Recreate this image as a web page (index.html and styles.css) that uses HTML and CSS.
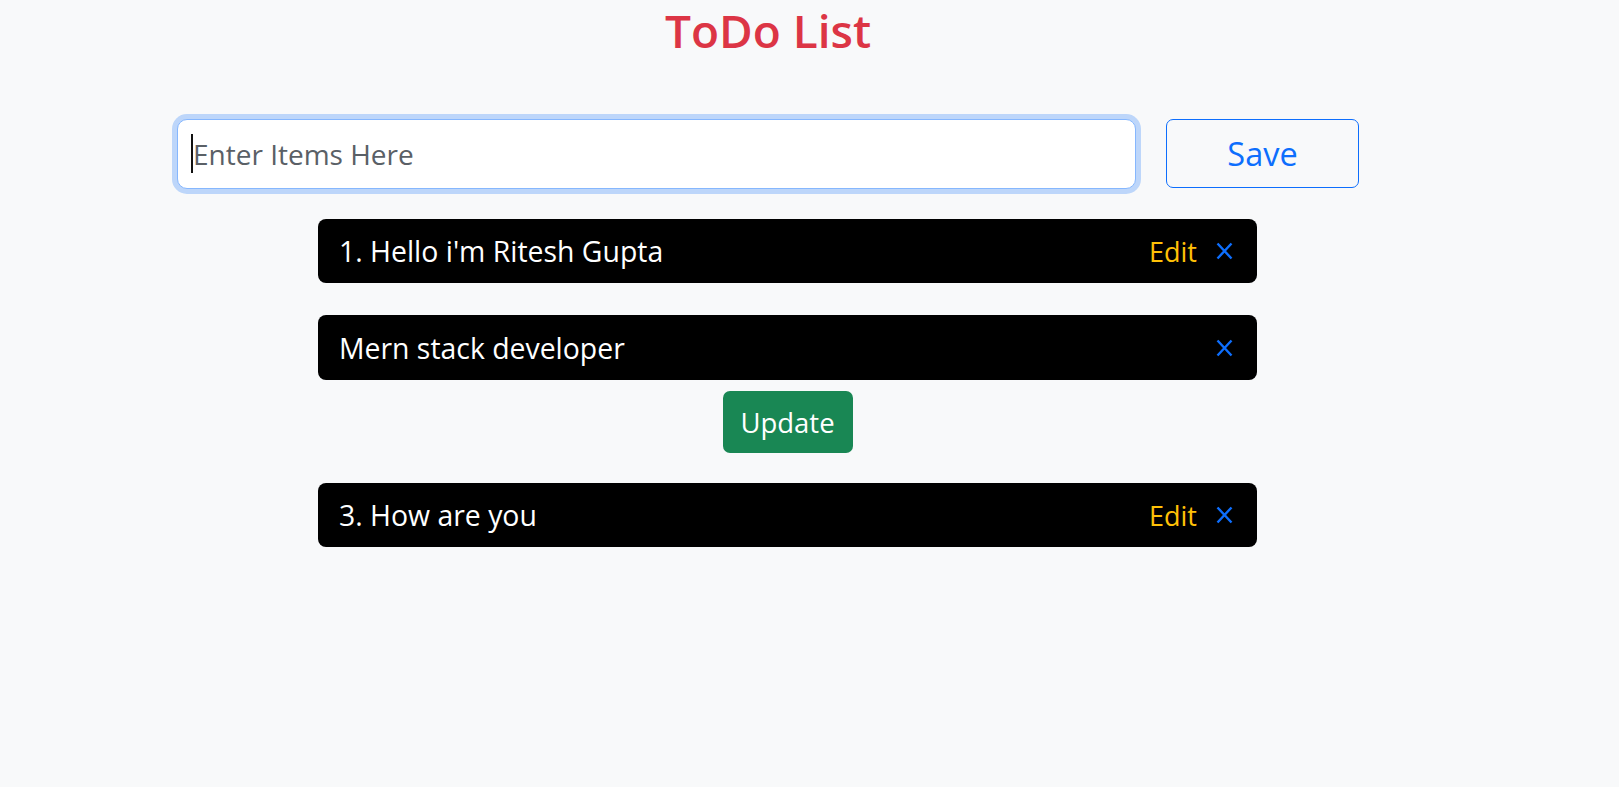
FILE: index.html
```html
<!DOCTYPE html>
<html lang="en">
<head>
<meta charset="utf-8">
<title>ToDo List</title>
<link rel="stylesheet" href="styles.css">
</head>
<body>
<main class="app">
  <h1 class="title">ToDo List</h1>
  <div class="entry">
    <div class="field">
      <input class="field-input" type="text" placeholder="Enter Items Here">
      <span class="caret"></span>
    </div>
    <button class="btn-save" type="button">Save</button>
  </div>
  <ul class="todos">
    <li class="todo">
      <span class="todo-text">1. Hello i'm Ritesh Gupta</span>
      <span class="todo-actions">
        <span class="todo-edit">Edit</span>
        <svg class="todo-del" width="17" height="18" viewBox="0 0 17 18"><path d="M1.5 1.5 L15.5 16.5 M15.5 1.5 L1.5 16.5" stroke="#0d6efd" stroke-width="2.4" fill="none"/></svg>
      </span>
    </li>
    <li class="todo todo-editing">
      <span class="todo-text">Mern stack developer</span>
      <span class="todo-actions">
        <svg class="todo-del" width="17" height="18" viewBox="0 0 17 18"><path d="M1.5 1.5 L15.5 16.5 M15.5 1.5 L1.5 16.5" stroke="#0d6efd" stroke-width="2.4" fill="none"/></svg>
      </span>
    </li>
    <li class="update-row">
      <button class="btn-update" type="button">Update</button>
    </li>
    <li class="todo">
      <span class="todo-text">3. How are you</span>
      <span class="todo-actions">
        <span class="todo-edit">Edit</span>
        <svg class="todo-del" width="17" height="18" viewBox="0 0 17 18"><path d="M1.5 1.5 L15.5 16.5 M15.5 1.5 L1.5 16.5" stroke="#0d6efd" stroke-width="2.4" fill="none"/></svg>
      </span>
    </li>
  </ul>
</main>
</body>
</html>
```

FILE: styles.css
```css
* {
  box-sizing: border-box;
}

html, body {
  margin: 0;
  padding: 0;
}

body {
  background: #f8f9fa;
  font-family: "Open Sans", "Noto Sans", sans-serif;
  color: #212529;
  min-height: 787px;
}

.app {
  width: 1536px;
}

.title {
  margin: 0;
  text-align: center;
  font-size: 46px;
  font-weight: 600;
  line-height: 60px;
  color: #dc3545;
}

.entry {
  display: flex;
  align-items: flex-start;
  gap: 30px;
  margin: 59px 0 0 177px;
}

.field {
  position: relative;
  width: 959px;
  height: 70px;
}

.field-input {
  display: block;
  width: 100%;
  height: 100%;
  padding: 0 0 0 15px;
  border: 1px solid #86b7fe;
  border-radius: 10px;
  background: #fff;
  box-shadow: 0 0 0 5px rgba(13, 110, 253, 0.25);
  font-family: inherit;
  font-size: 28px;
  color: #212529;
  outline: none;
}

.field-input::placeholder {
  color: #5a6066;
}

.caret {
  position: absolute;
  left: 14px;
  top: 15px;
  width: 2px;
  height: 39px;
  background: #111;
}

.btn-save {
  width: 193px;
  height: 69px;
  border: 1px solid #0d6efd;
  border-radius: 7px;
  background: transparent;
  color: #0d6efd;
  font-family: inherit;
  font-size: 32.5px;
  padding: 0;
}

.todos {
  list-style: none;
  margin: 30px 0 0 318px;
  padding: 0;
  width: 939px;
  display: flex;
  flex-direction: column;
}

.todo {
  display: flex;
  align-items: center;
  justify-content: space-between;
  height: 64px;
  padding: 0 24px 0 21px;
  background: #000;
  border-radius: 8px;
  color: #fff;
  font-size: 28.4px;
}

.todo + .todo {
  margin-top: 32px;
}

.todo-editing {
  height: 65px;
}

.todo-actions {
  display: flex;
  align-items: center;
  gap: 19px;
}

.todo-edit {
  color: #ffc107;
  font-size: 27px;
}

.todo-del {
  display: block;
}

.update-row {
  display: flex;
  justify-content: center;
  margin: 11px 0 30px;
}

.btn-update {
  width: 130px;
  height: 62px;
  border: none;
  border-radius: 7px;
  background: #198754;
  color: #fff;
  font-family: inherit;
  font-size: 27.5px;
  padding: 0;
}
```
